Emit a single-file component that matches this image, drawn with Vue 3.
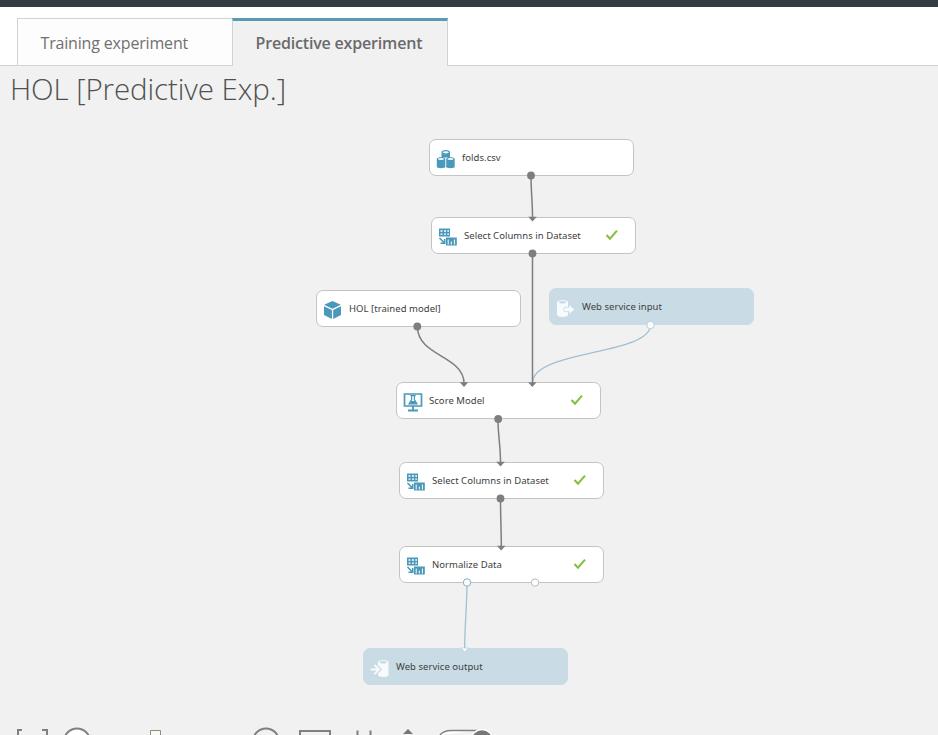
<script setup>
const nodes = [
  { id: 'folds', x: 429, y: 139, label: 'folds.csv', icon: 'data', low: true },
  { id: 'select1', x: 431, y: 217, label: 'Select Columns in Dataset', icon: 'columns', done: true },
  { id: 'model', x: 316, y: 290, label: 'HOL [trained model]', icon: 'cube' },
  { id: 'input', x: 549, y: 288, label: 'Web service input', icon: 'input', service: true, low: true },
  { id: 'score', x: 396, y: 382, label: 'Score Model', icon: 'score', done: true, low: true },
  { id: 'select2', x: 399, y: 462, label: 'Select Columns in Dataset', icon: 'columns', done: true },
  { id: 'normalize', x: 399, y: 546, label: 'Normalize Data', icon: 'columns', done: true },
  { id: 'output', x: 363, y: 648, label: 'Web service output', icon: 'output', service: true },
]

const links = [
  'M531 176C531 192 532.5 201 532.5 217',
  'M532.5 254V383',
  'M417.500 327C417.500 356 464 356 464 383',
  'M498 419C498 436 500.500 445 500.500 462',
  'M500.500 499C500.500 516 501.300 530 501.300 546',
]
const serviceLinks = [
  'M650.500 325C650.500 355 532.5 350 532.5 383',
  'M467 583C467 605 464.700 625 464.700 648',
]
const outPorts = [[531, 175.5], [532.5, 253.5], [417.3, 326.5], [498.2, 419], [500.5, 498.5]]
const inPorts = [[532.5, 217], [464, 382.5], [532.3, 382.5], [500.5, 462], [501.2, 546]]
</script>

<template>
  <main class="studio">
    <div class="topbar"></div>
    <nav class="tabs">
      <div class="tab">Training experiment</div>
      <div class="tab active">Predictive experiment</div>
    </nav>
    <h1>HOL [Predictive Exp.]</h1>

    <section class="canvas">
      <div
        v-for="n in nodes"
        :key="n.id"
        class="node"
        :class="{ service: n.service, low: n.low }"
        :style="{ left: n.x + 'px', top: n.y + 'px' }"
      >
        <svg class="icon" viewBox="0 0 20 20" width="20" height="20">
          <g v-if="n.icon === 'data'">
            <path class="blue" d="M5.500 3C5.500 .3 14 .3 14 3V8.500H5.500ZM.8 10C.8 7.500 9.300 7.500 9.300 10V18C9.300 19.500 .8 19.500 .8 18ZM10.200 10C10.200 7.500 18.700 7.500 18.700 10V18C18.700 19.500 10.200 19.500 10.200 18Z" />
            <g fill="#eef7fb"><ellipse cx="9.750" cy="3.300" rx="3.100" ry="1.100" /><ellipse cx="5" cy="10" rx="3.100" ry="1.100" /><ellipse cx="14.500" cy="10" rx="3.100" ry="1.100" /></g>
          </g>
          <g v-else-if="n.icon === 'columns'">
            <path class="blue" d="M1 1.500H12V9.500H1Z" />
            <path d="M2.500 4H4.500M6 4H8M9.300 4H11M2.500 7.200H4.500M6 7.200H8M9.300 7.200H11" stroke="#fff" stroke-width="1.300" />
            <path d="M1.500 11L6.500 16M2.500 16.200H6.700V12" fill="none" stroke="#4a98ba" stroke-width="1.600" />
            <path class="blue" d="M8 10.500H18.800V18.500H8Z" />
            <path d="M10.200 12.500V17.500M13.300 14.500V17.500M16.400 12.500V17.500" stroke="#fff" stroke-width="1" />
          </g>
          <g v-else-if="n.icon === 'cube'">
            <path class="blue" d="M9.500 1L17.800 4.800L9.500 8.700L1.200 4.800ZM1 6.200L8.900 9.900V19L1 15ZM10.200 9.900L18 6.200V15L10.200 19Z" />
          </g>
          <g v-else-if="n.icon === 'score'" fill="none" stroke="#4a98ba">
            <path d="M1.500 2H18.500V14H1.500Z" stroke-width="1.700" />
            <path d="M10 14V18M5 18.500H15" stroke-width="1.800" />
            <path d="M7.300 3.700H12.700M8.600 4V7.500L6 12H14L11.400 7.500V4" stroke-width="1.200" />
            <path class="blue" stroke="none" d="M8 9H12L13.700 12H6.300Z" />
          </g>
          <g v-else-if="n.icon === 'input'">
            <path d="M1 4C1 1.500 12 1.500 12 4V17C12 19.500 1 19.500 1 17Z" fill="#f7fbfd" />
            <ellipse cx="6.500" cy="4.300" rx="3.600" ry="1.200" fill="#c9dbe5" />
            <path d="M8 9.300H13V6.500L18.500 11.500L13 16.500V13.500H8Z" fill="#f7fbfd" stroke="#c9dbe5" stroke-width=".7" />
          </g>
          <g v-else>
            <path d="M8 4C8 1.500 18.500 1.500 18.500 4V17C18.500 19.500 8 19.500 8 17Z" fill="#f7fbfd" />
            <ellipse cx="13.200" cy="4.300" rx="3.400" ry="1.200" fill="#c9dbe5" />
            <path d="M5.500 7L10.200 11.500L5.500 16" fill="none" stroke="#c9dbe5" stroke-width="2.800" />
            <path d="M.5 11.500H9M4.500 7L9 11.500L4.500 16" fill="none" stroke="#f7fbfd" stroke-width="2" />
          </g>
        </svg>
        <span class="label">{{ n.label }}</span>
        <svg v-if="n.done" class="check" viewBox="0 0 14 12" width="14" height="12">
          <path d="M1.500 6L5 9.700L12 1.700" fill="none" stroke="#82c03b" stroke-width="2" />
        </svg>
      </div>

      <svg class="links" viewBox="0 0 938 735" width="938" height="735">
        <g fill="none">
          <path v-for="d in serviceLinks" :key="d" :d="d" stroke="#a0c0d3" stroke-width="1.300" />
          <path v-for="d in links" :key="d" :d="d" stroke="#7e7e7e" stroke-width="1.500" />
        </g>
        <g fill="#7e7e7e">
          <circle v-for="(p, i) in outPorts" :key="i" :cx="p[0]" :cy="p[1]" r="3.900" />
          <path v-for="(p, i) in inPorts" :key="i" :d="`M${p[0] - 4.300} ${p[1] - 0.3}h8.600l-4.300 4.800z`" />
        </g>
        <g fill="#fff">
          <circle cx="650.500" cy="325" r="3.700" stroke="#b7d0de" />
          <circle cx="467" cy="582.500" r="3.700" stroke="#82adc3" />
          <circle cx="535" cy="582.500" r="3.700" stroke="#bcbcbc" />
          <path d="M461 648h7.500l-3.800 4z" stroke="#a8c8d8" stroke-width=".6" />
        </g>
      </svg>
    </section>

    <footer class="toolbar">
      <svg class="fit" width="32" height="8" viewBox="0 0 32 8"><path d="M2 8V3H6M26 3H31V8" /></svg>
      <svg class="search" width="30" height="8" viewBox="0 0 30 8"><circle cx="15" cy="14.500" r="13" fill="#fff" /></svg>
      <svg class="handle" width="11" height="8" viewBox="0 0 11 8"><path d="M.5 8V3.500H10.500V8" fill="#fafaf5" /></svg>
      <svg class="zoom" width="30" height="8" viewBox="0 0 30 8"><circle cx="15" cy="14.500" r="13" /></svg>
      <svg class="map" width="32" height="8" viewBox="0 0 32 8"><path d="M1 8V4H31V8" /></svg>
      <svg class="grid" width="17" height="8" viewBox="0 0 17 8"><path d="M1.500 8V3.500M14.500 8V3.500" /></svg>
      <svg class="arrow" width="12" height="8" viewBox="0 0 12 8"><path class="solid" d="M6 2L11 7H1Z" /></svg>
      <svg class="switch" width="56" height="8" viewBox="0 0 56 8">
        <path d="M2 8C5 4.500 9 3.500 13 3.500H40" fill="#fff" />
        <circle class="knob" cx="44" cy="13.500" r="11" />
      </svg>
    </footer>
  </main>
</template>

<style>
body {
  background: #f1f1f1;
  overflow: hidden;
}
</style>

<style scoped>
.studio {
  position: relative;
  display: flex;
  flex-direction: column;
  width: 938px;
  height: 735px;
  overflow: hidden;
  background: #f1f1f1;
  font-family: "Open Sans", "Noto Sans", sans-serif;
}
.topbar {
  height: 7px;
  background: #333b43;
}
.tabs {
  box-sizing: border-box;
  display: flex;
  height: 59px;
  padding: 11px 0 0 17px;
  background: #fff;
  border-bottom: 1px solid #d2d2d2;
}
.tab {
  box-sizing: border-box;
  width: 215px;
  height: 47px;
  padding-left: 22.500px;
  border: 1px solid #d2d2d2;
  border-width: 1px 0 0 1px;
  background: #fdfdfd;
  color: #707070;
  font-size: 16px;
  line-height: 48px;
  letter-spacing: -0.17px;
  white-space: nowrap;
}
.active {
  width: 216px;
  height: 48px;
  border-width: 3px 1px 0 1px;
  border-top-color: #559bb3;
  background: #f1f1f1;
  color: #6a6a6a;
  font-weight: 600;
  line-height: 44px;
  letter-spacing: -0.18px;
}
h1 {
  margin: 0;
  padding-left: 10px;
  color: #505050;
  font-size: 29.500px;
  font-weight: 300;
  line-height: 46px;
  letter-spacing: -0.1px;
}
.canvas,
.links {
  position: absolute;
  top: 0;
  left: 0;
}
.node {
  position: absolute;
  box-sizing: border-box;
  display: flex;
  align-items: center;
  width: 205px;
  height: 37px;
  padding: 0 16px 0 6px;
  border: 1px solid #c4c4c4;
  border-radius: 7px;
  background: #fff;
  color: #404040;
}
.service {
  border-color: #c9dbe5;
  background: #c9dbe5;
}
.icon {
  flex: none;
  margin: 3px 6px 0 0;
}
.blue {
  fill: #4a98ba;
}
.label {
  flex: 1;
  font-family: "Noto Sans", sans-serif;
  font-size: 9.500px;
  line-height: 14px;
  letter-spacing: 0.04px;
  white-space: nowrap;
}
.low .label {
  padding-top: 1px;
}
.check {
  margin-bottom: 1px;
}
.toolbar {
  display: flex;
  height: 8px;
  margin-top: auto;
  padding-left: 16px;
}
.toolbar svg {
  flex: none;
  fill: none;
  stroke: #808080;
  stroke-width: 2;
}
.search {
  margin-left: 14px;
}
.toolbar .handle {
  margin-left: 58px;
  stroke: #8c8f80;
  stroke-width: 1;
}
.zoom {
  margin-left: 90px;
}
.map {
  margin-left: 18px;
}
.grid {
  margin-left: 25px;
}
.arrow {
  margin-left: 29px;
}
.toolbar .solid {
  fill: #777;
  stroke: none;
}
.toolbar .switch {
  margin-left: 24px;
  stroke-width: 1.500;
}
.toolbar .knob {
  fill: #777;
  stroke: #fff;
}
</style>
